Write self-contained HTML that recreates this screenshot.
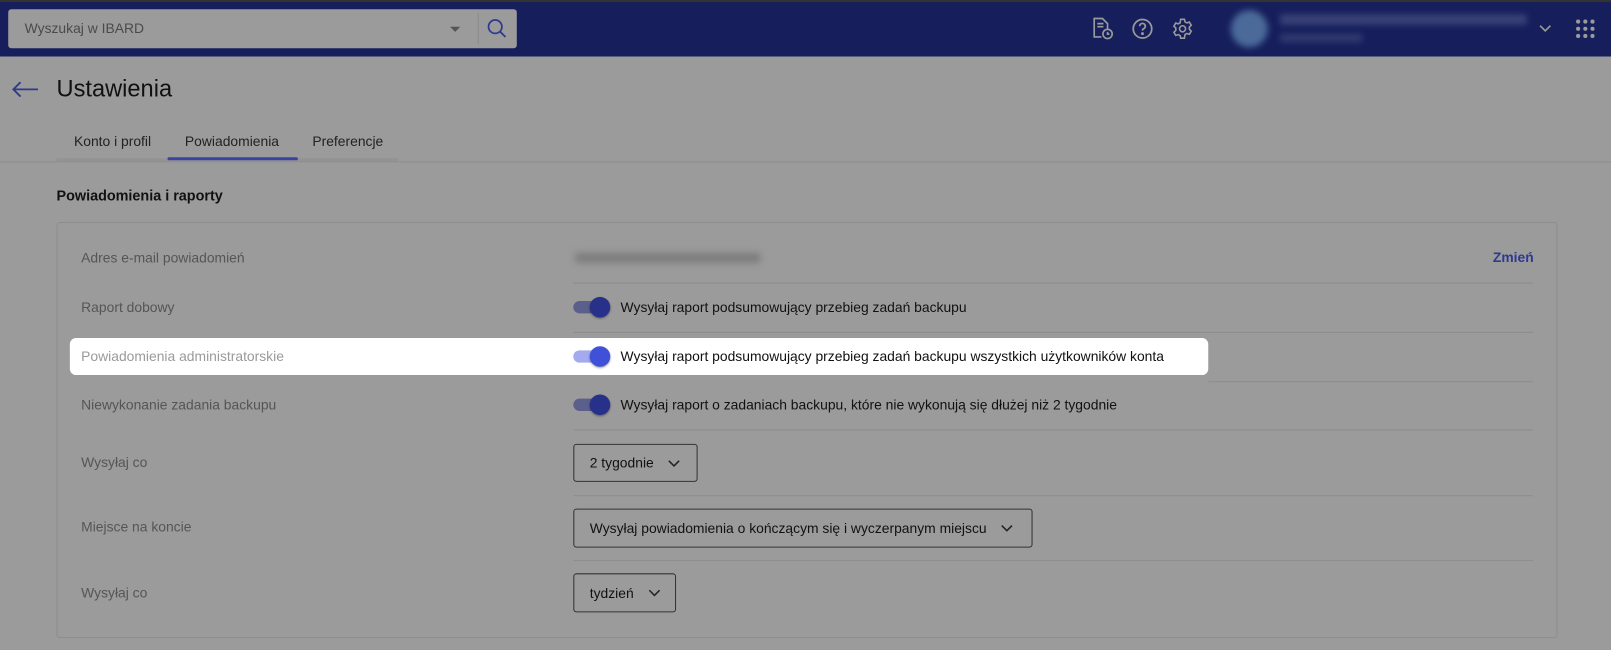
<!DOCTYPE html>
<html><head><meta charset="utf-8"><style>
*{margin:0;padding:0;box-sizing:border-box}
html,body{width:1611px;height:650px;overflow:hidden;background:#9b9b9b;font-family:"Liberation Sans",sans-serif}
#w{position:absolute;left:0;top:0;width:1568px;height:633px;transform:scale(1.02742);transform-origin:0 0}
.a{position:absolute}
.hdr{left:0;top:0;width:1568px;height:55px;background:#161f5c;border-top:2px solid #333}
.lbl{position:absolute;left:79px;font-size:13.5px;color:#555;transform:translateY(-50%)}
.txt{position:absolute;left:604px;font-size:13.5px;color:#111;transform:translateY(-50%)}
.div{position:absolute;left:558px;width:934px;height:1px;background:#8d8d8d}
.tg{position:absolute;left:558px;width:36px;height:22px;transform:translateY(-50%)}
.tg .t{position:absolute;left:0;top:5px;width:30px;height:12px;border-radius:6px;background:#5a5f8c}
.tg .k{position:absolute;left:16px;top:1px;width:20px;height:20px;border-radius:50%;background:#27318a;box-shadow:0 1px 2px rgba(0,0,0,.4)}
.sel{position:absolute;left:558px;border:1px solid #333;border-radius:3px;font-size:13.5px;color:#111;padding-left:15px;display:flex;align-items:center}
.sel svg{margin-left:14px}
</style></head><body><div id="w">
<div class="a hdr"></div>
<div class="a" style="left:8px;top:9px;width:495px;height:38px;background:#9b9b9b;border-radius:3px"></div>
<div class="a" style="left:24px;top:20px;font-size:13.5px;color:#4a4a4a">Wyszukaj w IBARD</div>
<div class="a" style="left:438px;top:26px;width:0;height:0;border-left:5px solid transparent;border-right:5px solid transparent;border-top:5px solid #555"></div>
<div class="a" style="left:465px;top:13px;width:1px;height:30px;background:#8a8a8a"></div>
<svg class="a" style="left:474px;top:18px" width="20" height="20" viewBox="0 0 20 20"><circle cx="8" cy="8" r="6.5" fill="none" stroke="#2e3a8c" stroke-width="1.7"/><path d="M13 13l5 5" stroke="#2e3a8c" stroke-width="1.8"/></svg>
<svg class="a" style="left:1061px;top:16px" width="24" height="24" viewBox="0 0 24 24" fill="none" stroke="#9a9a9a" stroke-width="1.6"><path d="M11 20H4V2h8l5 5v5"/><path d="M7 7h6M7 10h6"/><circle cx="17" cy="17" r="4.5"/><path d="M17 15v2.3h1.8"/></svg>
<svg class="a" style="left:1101px;top:17px" width="22" height="22" viewBox="0 0 22 22" fill="none" stroke="#9a9a9a" stroke-width="1.7"><circle cx="11" cy="11" r="9"/><path d="M8.3 8.5a2.7 2.7 0 1 1 3.7 2.5c-.8.4-1 .9-1 1.8"/><circle cx="11" cy="15.7" r=".6" fill="#9a9a9a"/></svg>
<svg class="a" style="left:1140px;top:17px" width="22" height="22" viewBox="0 0 24 24" fill="none" stroke="#9a9a9a" stroke-width="1.7"><circle cx="12" cy="12" r="3.2"/><path d="M10 2h4l.6 2.7 2 1.1 2.6-.9 2 3.4-2 1.9v2.4l2 1.9-2 3.4-2.6-.9-2 1.1L14 22h-4l-.6-2.7-2-1.1-2.6.9-2-3.4 2-1.9V11.2l-2-1.9 2-3.4 2.6.9 2-1.1z"/></svg>
<div class="a" style="left:1198px;top:10px;width:36px;height:36px;border-radius:50%;background:#4b6a9a;filter:blur(3px)"></div>
<div class="a" style="left:1246px;top:14px;width:240px;height:10px;background:#3a4378;filter:blur(3px)"></div>
<div class="a" style="left:1246px;top:33px;width:80px;height:8px;background:#323b70;filter:blur(3px)"></div>
<svg class="a" style="left:1497px;top:23px" width="14" height="10" viewBox="0 0 14 10"><path d="M2 2l5 5 5-5" fill="none" stroke="#9a9a9a" stroke-width="1.6"/></svg>
<svg class="a" style="left:1534px;top:19px" width="18" height="18" viewBox="0 0 18 18" fill="#9a9a9a"><circle cx="2" cy="2" r="2"/><circle cx="9" cy="2" r="2"/><circle cx="16" cy="2" r="2"/><circle cx="2" cy="9" r="2"/><circle cx="9" cy="9" r="2"/><circle cx="16" cy="9" r="2"/><circle cx="2" cy="16" r="2"/><circle cx="9" cy="16" r="2"/><circle cx="16" cy="16" r="2"/></svg>
<svg class="a" style="left:10px;top:78px" width="28" height="18" viewBox="0 0 28 18"><path d="M27 9H3M10 2L3 9l7 7" fill="none" stroke="#2e3a8c" stroke-width="1.8"/></svg>
<div class="a" style="left:55px;top:73px;font-size:23px;color:#111">Ustawienia</div>
<div class="a" style="left:72px;top:130px;font-size:13.5px;color:#222">Konto i profil</div>
<div class="a" style="left:180px;top:130px;font-size:13.5px;color:#222">Powiadomienia</div>
<div class="a" style="left:304px;top:130px;font-size:13.5px;color:#222">Preferencje</div>
<div class="a" style="left:0;top:157px;width:1568px;height:1px;background:#8e8e8e"></div>
<div class="a" style="left:55px;top:154px;width:333px;height:3px;background:#939393"></div>
<div class="a" style="left:163px;top:153px;width:127px;height:3px;background:#3a44a0;border-radius:2px"></div>
<div class="a" style="left:55px;top:182px;font-size:14px;font-weight:bold;color:#111">Powiadomienia i raporty</div>
<div class="a" style="left:55px;top:216px;width:1461px;height:405px;border:1px solid #8e8e8e;border-radius:3px"></div>
<div class="lbl" style="top:251px">Adres e-mail powiadomień</div>
<div class="a" style="left:560px;top:246px;width:180px;height:10px;background:#7e7e7e;filter:blur(3px)"></div>
<div class="a" style="left:1453px;top:243px;font-size:13.5px;color:#2e3a8c;font-weight:bold">Zmień</div>
<div class="div" style="top:275px"></div>
<div class="lbl" style="top:299px">Raport dobowy</div>
<div class="tg" style="top:299px"><div class="t"></div><div class="k"></div></div>
<div class="txt" style="top:299px">Wysyłaj raport podsumowujący przebieg zadań backupu</div>
<div class="div" style="top:323px"></div>
<div class="a" style="left:68px;top:329px;width:1108px;height:36px;background:#fff;border-radius:6px"></div>
<div class="lbl" style="top:347px;color:#9a9a9a">Powiadomienia administratorskie</div>
<div class="tg" style="top:347px"><div class="t" style="background:#a3aaee"></div><div class="k" style="background:#3f51d8"></div></div>
<div class="txt" style="top:347px">Wysyłaj raport podsumowujący przebieg zadań backupu wszystkich użytkowników konta</div>
<div class="div" style="top:371px;left:1176px;width:316px"></div>
<div class="lbl" style="top:394px">Niewykonanie zadania backupu</div>
<div class="tg" style="top:394px"><div class="t"></div><div class="k"></div></div>
<div class="txt" style="top:394px">Wysyłaj raport o zadaniach backupu, które nie wykonują się dłużej niż 2 tygodnie</div>
<div class="div" style="top:418px"></div>
<div class="lbl" style="top:450px">Wysyłaj co</div>
<div class="sel" style="top:432px;width:121px;height:37px">2 tygodnie<svg width="12" height="8" viewBox="0 0 12 8"><path d="M1 1.5l5 5 5-5" fill="none" stroke="#222" stroke-width="1.5"/></svg></div>
<div class="div" style="top:482px"></div>
<div class="lbl" style="top:513px">Miejsce na koncie</div>
<div class="sel" style="top:495px;width:447px;height:38px">Wysyłaj powiadomienia o kończącym się i wyczerpanym miejscu<svg width="12" height="8" viewBox="0 0 12 8"><path d="M1 1.5l5 5 5-5" fill="none" stroke="#222" stroke-width="1.5"/></svg></div>
<div class="div" style="top:545px"></div>
<div class="lbl" style="top:577px">Wysyłaj co</div>
<div class="sel" style="top:558px;width:100px;height:38px">tydzień<svg width="12" height="8" viewBox="0 0 12 8"><path d="M1 1.5l5 5 5-5" fill="none" stroke="#222" stroke-width="1.5"/></svg></div>
</div></body></html>
